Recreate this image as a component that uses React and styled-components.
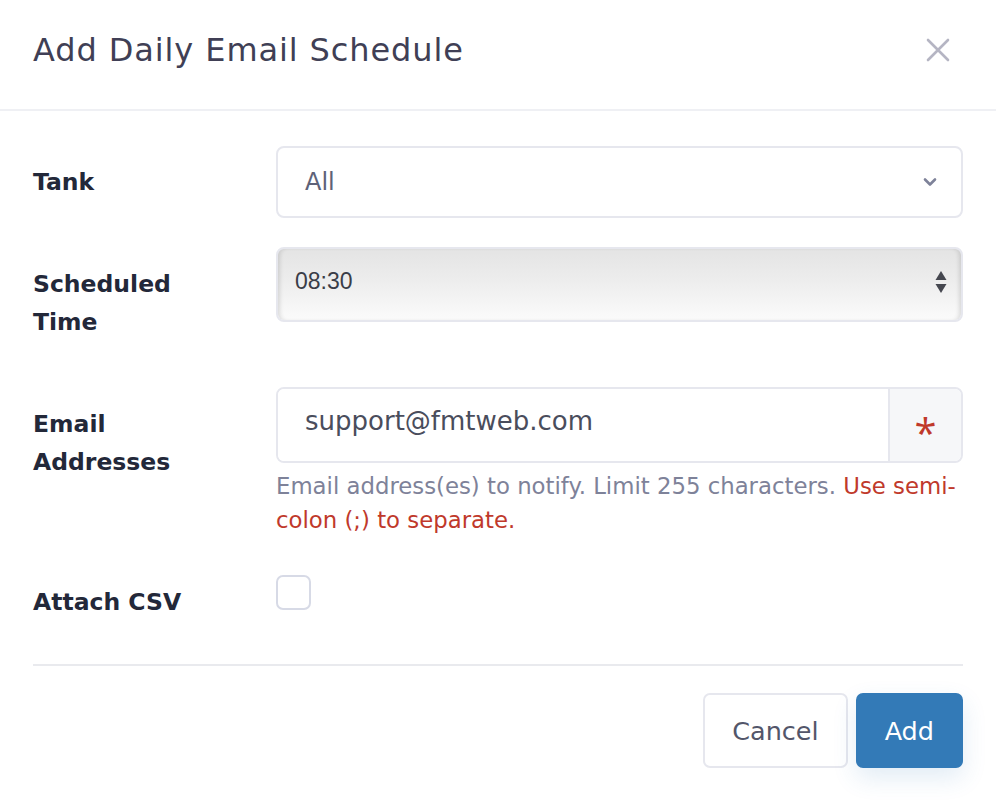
import React from "react";
import styled, { createGlobalStyle } from "styled-components";

const GlobalStyle = createGlobalStyle`
  html, body {
    margin: 0;
    padding: 0;
    background: #ffffff;
  }
  * {
    box-sizing: border-box;
  }
`;

const Modal = styled.div`
  width: 996px;
  height: 800px;
  background: #ffffff;
  font-family: "DejaVu Sans", "Open Sans", sans-serif;
  display: flex;
  flex-direction: column;
  overflow: hidden;
`;

const Header = styled.div`
  height: 111px;
  border-bottom: 2px solid #eff0f4;
  display: flex;
  align-items: center;
  justify-content: space-between;
  padding: 0 33px 10px 33px;
`;

const Title = styled.h2`
  margin: 0;
  font-size: 32px;
  font-weight: 400;
  letter-spacing: 0.9px;
  color: #403f55;
`;

const CloseButton = styled.button`
  border: none;
  background: none;
  padding: 0;
  margin-right: 12px;
  width: 26px;
  height: 26px;
  display: flex;
  align-items: center;
  justify-content: center;
  cursor: pointer;
`;

const Body = styled.div`
  padding: 35px 33px 0 33px;
  display: flex;
  flex-direction: column;
`;

const Row = styled.div`
  display: grid;
  grid-template-columns: 243px 1fr;
  align-items: start;
  margin-bottom: ${(p) => p.$gap}px;
`;

const Label = styled.div`
  font-size: 23.5px;
  font-weight: 700;
  line-height: 38px;
  color: #232839;
  padding-top: ${(p) => p.$top}px;
`;

const SelectBox = styled.div`
  height: 72px;
  border: 2px solid #e6e7ee;
  border-radius: 8px;
  display: flex;
  align-items: center;
  justify-content: space-between;
  padding: 0 24px 0 27px;
  font-size: 24px;
  color: #5e6278;
`;

const TimeBox = styled.div`
  height: 75px;
  border: 2px solid #e6e7ee;
  border-radius: 8px;
  display: flex;
  align-items: center;
  justify-content: space-between;
  padding: 0 14px 6px 17px;
  font-family: "Liberation Sans", Arial, sans-serif;
  font-size: 23px;
  color: #3a3d48;
  background: linear-gradient(#e4e4e4 0%, #ededed 45%, #fbfbfb 100%);
  box-shadow: inset 4px 0 4px -2px rgba(0, 0, 0, 0.12),
    inset -4px 0 4px -2px rgba(0, 0, 0, 0.12);
`;

const InputGroup = styled.div`
  display: flex;
  height: 76px;
  border: 2px solid #e6e7ee;
  border-radius: 8px;
  overflow: hidden;
`;

const TextInput = styled.input`
  flex: 1;
  min-width: 0;
  border: none;
  outline: none;
  padding: 0 27px 8px 27px;
  font-family: "DejaVu Sans", "Open Sans", sans-serif;
  font-size: 26px;
  color: #4a4d5c;
  background: #ffffff;
`;

const Addon = styled.div`
  width: 73px;
  border-left: 2px solid #e6e7ee;
  background: #f6f7f9;
  display: flex;
  align-items: center;
  justify-content: center;
  color: #c0392b;
  font-family: "Open Sans", sans-serif;
  font-size: 40px;
  font-weight: 500;
  padding-top: 14px;
`;

const Help = styled.div`
  margin-top: 6px;
  font-size: 22.8px;
  line-height: 34px;
  color: #7e8299;
`;

const Danger = styled.span`
  color: #c0392b;
`;

const Checkbox = styled.input`
  appearance: none;
  margin: 0;
  width: 35px;
  height: 35px;
  border: 2px solid #d7dae6;
  border-radius: 7px;
  background: #ffffff;
`;

const Separator = styled.hr`
  margin: 0 33px;
  border: none;
  border-top: 2px solid #e9eaee;
`;

const Footer = styled.div`
  display: flex;
  justify-content: flex-end;
  gap: 8px;
  padding: 27px 33px 0 33px;
`;

const Button = styled.button`
  height: 75px;
  padding: 0 27px;
  border-radius: 7px;
  font-family: "DejaVu Sans", "Open Sans", sans-serif;
  font-size: 25.5px;
  cursor: pointer;
  border: 2px solid ${(p) => (p.$primary ? "#337ab7" : "#e6e7ee")};
  background: ${(p) => (p.$primary ? "#337ab7" : "#ffffff")};
  color: ${(p) => (p.$primary ? "#ffffff" : "#53566a")};
  box-shadow: ${(p) => (p.$primary ? "0 10px 24px rgba(51, 122, 183, 0.14)" : "none")};
`;

const ChevronDown = () => (
  <svg width="14" height="10" viewBox="0 0 14 10">
    <path d="M2 2.5 L7 7.5 L12 2.5" fill="none" stroke="#7e8299" strokeWidth="2.6" strokeLinecap="round" strokeLinejoin="round" />
  </svg>
);

const Spinner = () => (
  <svg width="12" height="24" viewBox="0 0 12 24">
    <path d="M6 1 L11.5 10 L0.5 10 Z" fill="#45474f" />
    <path d="M6 23 L11.5 14 L0.5 14 Z" fill="#45474f" />
  </svg>
);

const CloseIcon = () => (
  <svg width="24" height="24" viewBox="0 0 24 24">
    <path d="M2 2 L22 22 M22 2 L2 22" stroke="#b5b5c3" strokeWidth="2.6" strokeLinecap="round" />
  </svg>
);

export default function App() {
  return (
    <>
      <GlobalStyle />
      <Modal>
        <Header>
          <Title>Add Daily Email Schedule</Title>
          <CloseButton aria-label="Close">
            <CloseIcon />
          </CloseButton>
        </Header>
        <Body>
          <Row $gap={29}>
            <Label $top={17}>Tank</Label>
            <SelectBox>
              <span>All</span>
              <ChevronDown />
            </SelectBox>
          </Row>
          <Row $gap={46}>
            <Label $top={18}>
              Scheduled
              <br />
              Time
            </Label>
            <TimeBox>
              <span>08:30</span>
              <Spinner />
            </TimeBox>
          </Row>
          <Row $gap={38}>
            <Label $top={18}>
              Email
              <br />
              Addresses
            </Label>
            <div>
              <InputGroup>
                <TextInput readOnly defaultValue="support@fmtweb.com" />
                <Addon>*</Addon>
              </InputGroup>
              <Help>
                Email address(es) to notify. Limit 255 characters.{" "}
                <Danger>Use semi-colon (;) to separate.</Danger>
              </Help>
            </div>
          </Row>
          <Row $gap={43}>
            <Label $top={8}>Attach CSV</Label>
            <div>
              <Checkbox type="checkbox" />
            </div>
          </Row>
        </Body>
        <Separator />
        <Footer>
          <Button>Cancel</Button>
          <Button $primary>Add</Button>
        </Footer>
      </Modal>
    </>
  );
}
